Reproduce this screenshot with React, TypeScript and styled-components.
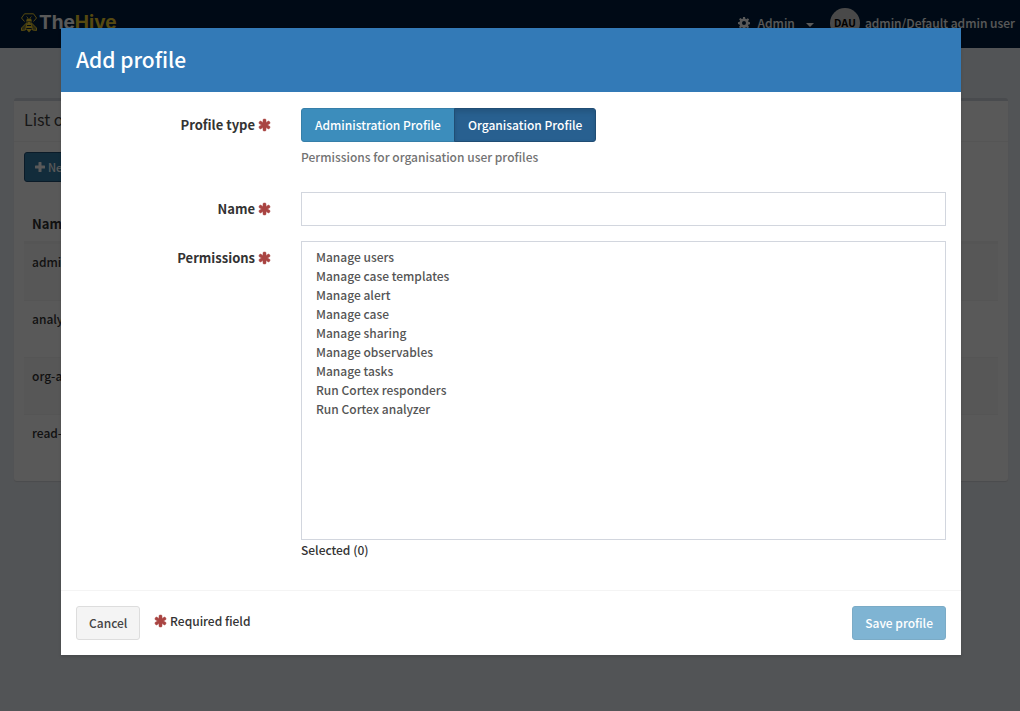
import React, { useState } from "react";
import styled, { createGlobalStyle } from "styled-components";

const GlobalStyle = createGlobalStyle`
  *, *::before, *::after { box-sizing: border-box; }
  html { min-height: 100%; background: #ecf0f5; }
  body {
    margin: 0;
    color: #333;
    background: #ecf0f5;
    font: 500 12px/20px "Noto Sans CJK SC", "Noto Sans", sans-serif;
  }
  button, input, select { font: inherit; }
`;

const Navbar = styled.header`
  display: flex;
  align-items: flex-start;
  justify-content: space-between;
  height: 48px;
  padding: 0 5px 0 20px;
  background: #001f3f;
  color: #fff;
`;

const Brand = styled.a`
  display: flex;
  align-items: center;
  gap: 1px;
  padding-top: 13px;
  color: #fff;
  font: 700 19px/20px Inter, sans-serif;
  text-decoration: none;
`;

const BrandAccent = styled.span`
  color: #f3d02f;
`;

const NavMenu = styled.nav`
  display: flex;
  align-items: center;
  gap: 16px;
  padding-top: 8px;
`;

const NavLink = styled.a`
  display: flex;
  align-items: center;
  gap: 5px;
  color: #fff;
  text-decoration: none;
`;

const AdminLink = styled(NavLink)`
  gap: 8px;
`;

const Caret = styled.span`
  margin: 4px 0 0 3px;
  border: 4px solid transparent;
  border-top-color: #fff;
  border-bottom: 0;
`;

const Avatar = styled.span`
  width: 30px;
  height: 30px;
  border-radius: 50%;
  background: #d2d2d2;
  color: #000;
  font: 700 10px/30px "Open Sans", sans-serif;
  text-align: center;
`;

const Content = styled.main`
  padding: 50px 12px 30px 14px;
`;

const Card = styled.section`
  border-top: 3px solid #d2d6de;
  border-radius: 3px;
  background: #fff;
  box-shadow: 0 1px 1px rgba(0, 0, 0, 0.1);
`;

const CardTitle = styled.h3`
  margin: 0;
  padding: 8px 10px 12px;
  border-bottom: 1px solid #f4f4f4;
  color: #444;
  font-size: 16px;
  font-weight: 400;
  line-height: 20px;
`;

const CardBody = styled.div`
  padding: 10px;
`;

const Button = styled.button`
  display: inline-flex;
  align-items: center;
  justify-content: center;
  height: 34px;
  padding: 0 12px;
  border: 1px solid #367fa9;
  border-radius: 3px;
  background: #3c8dbc;
  color: #fff;
  white-space: nowrap;
  &:disabled { opacity: 0.65; }
`;

const NewButton = styled(Button)`
  gap: 3px;
  height: 30px;
  padding: 0 10px;
  border-color: #204d74;
  background: #367fa9;
  font-size: 11px;
`;

const CancelButton = styled(Button)`
  border-color: #ddd;
  background: #f4f4f4;
  color: #444;
`;

const Table = styled.table`
  width: 100%;
  margin-top: 24px;
  border-collapse: separate;
  border-spacing: 0;
  th {
    height: 37px;
    padding: 8px 8px 7px;
    border-bottom: 2px solid #f4f4f4;
    font-size: 13px;
    text-align: left;
  }
  td {
    height: 57px;
    padding: 8px;
    border-top: 1px solid #f4f4f4;
    vertical-align: top;
  }
  tbody tr:nth-child(odd) { background: #f9f9f9; }
`;

const Overlay = styled.div`
  position: absolute;
  inset: 0;
  min-height: 100vh;
  padding: 28px 0 28px 2px;
  background: rgba(0, 0, 0, 0.65);
`;

const Dialog = styled.form`
  width: 100%;
  max-width: 900px;
  margin: 0 auto;
  background: #fff;
  box-shadow: 0 2px 3px rgba(0, 0, 0, 0.125);
`;

const DialogHeader = styled.header`
  padding: 15px 15px 16px;
  background: #337ab7;
  color: #fff;
`;

const DialogTitle = styled.h2`
  margin: 0;
  font-size: 21px;
  font-weight: 500;
  line-height: 33px;
`;

const DialogBody = styled.div`
  padding: 16px 15px 15px;
`;

const FormRow = styled.div`
  display: flex;
  margin: 0 -15px;
  padding-bottom: 15px;
`;

const LabelCell = styled.div`
  flex: 0 0 25%;
  padding: 7px 15px 0;
  font-size: 13px;
  font-weight: 700;
  text-align: right;
`;

const FieldCell = styled.div`
  flex: 0 0 75%;
  padding: 0 15px;
`;

const ButtonGroup = styled.div`
  display: flex;
`;

const TypeButton = styled(Button)<{ $active?: boolean; $side: "left" | "right" }>`
  padding: 0 13px;
  margin-left: ${(p) => (p.$side === "right" ? -1 : 0)}px;
  border-radius: ${(p) => (p.$side === "left" ? "3px 0 0 3px" : "0 3px 3px 0")};
  ${(p) =>
    p.$active &&
    `
    border-color: #204d74;
    background: #286090;
    box-shadow: inset 0 3px 5px rgba(0, 0, 0, 0.125);
    z-index: 1;
  `}
`;

const Help = styled.p`
  margin: 5px 0 10px;
  color: #737373;
`;

const TextInput = styled.input`
  display: block;
  width: 100%;
  height: 34px;
  padding: 6px 12px;
  border: 1px solid #d2d6de;
  border-radius: 0;
  background: #fff;
  color: #555;
  outline: 0;
`;

const PermissionList = styled.select`
  display: block;
  width: 100%;
  height: 299px;
  padding: 6px 12px;
  border: 1px solid #d2d6de;
  border-radius: 0;
  background: #fff;
  color: #555;
  outline: 0;
  option {
    height: 19px;
    padding: 0 2px;
    font-weight: 500;
    line-height: 19px;
  }
`;

const DialogFooter = styled.footer`
  display: flex;
  align-items: flex-start;
  gap: 14px;
  padding: 15px;
  border-top: 1px solid #f4f4f4;
`;

const Note = styled.span`
  flex: 1;
  padding-top: 5px;
`;

const Glyph = styled.svg`
  flex: none;
  fill: currentColor;
`;

const RequiredGlyph = styled(Glyph)`
  color: #a94442;
  vertical-align: -2px;
`;

const Required = () => (
  <RequiredGlyph width="13" height="14" viewBox="128 0 1536 1792" aria-label="required">
    <path
      stroke="currentColor"
      strokeWidth="60"
      d="M1546 1050l-266-154 266-154q46-26 59.500-77.500t-12.500-97.500l-64-110q-26-46-77.500-59.500t-97.500 12.500l-266 153v-307q0-52-38-90t-90-38h-128q-52 0-90 38t-38 90v307l-266-153q-46-26-97.500-12.500t-77.500 59.500l-64 110q-26 46-12.500 97.500t59.500 77.500l266 154-266 154q-46 26-59.500 77.500t12.500 97.500l64 110q26 46 77.500 59.500t97.500-12.500l266-153v307q0 52 38 90t90 38h128q52 0 90-38t38-90v-307l266 153q46 26 97.500 12.500t77.500-59.500l64-110q26-46 12.500-97.500t-59.500-77.500z"
    />
  </RequiredGlyph>
);

const Plus = () => (
  <Glyph width="10" height="10" viewBox="0 0 10 10">
    <path d="M4 0h2q.5 0 .5.500v3h3q.5 0 .5.500v2q0 .5-.5.500h-3v3q0 .5-.5.500h-2q-.5 0-.5-.5v-3h-3q-.5 0-.5-.5v-2q0-.5.500-.5h3v-3q0-.5.500-.5z" />
  </Glyph>
);

const Cog = () => (
  <Glyph width="12" height="12" viewBox="0 0 24 24">
    <path
      fillRule="evenodd"
      d="M10 0h4l.7 3.600 2 .8 3-2 2.500 2.500-2 3 .9 2.100 3.400.6v3.600l-3.600.7-.8 2 2 3-2.600 2.600-3-2-2 .9-.7 3.400h-3.600l-.7-3.600-2-.8-3 2-2.500-2.500 2-3-.9-2.100-3.300-.6v-3.800l3.600-.7.8-2-2-3 2.500-2.500 3 2 2.100-.9zM12 8a4 4 0 1 0 0 8a4 4 0 0 0 0-8z"
    />
  </Glyph>
);

const BeeLogo = () => (
  <svg width="18" height="20" viewBox="0 0 18 20" fill="none" stroke="#f3d02f" aria-hidden="true">
    <path d="M4.500 8.500L1.500 5 4.500.8h9L16.500 5 13.500 8.500" />
    <path d="M6.500 3.500L8 5M11.500 3.500L10 5" strokeWidth="0.8" />
    <path d="M7 5.500h4L12 8.500H6z" fill="#f3d02f" stroke="none" />
    <path d="M7 9.500L1.500 15v2.500l4-.5zM11 9.500l5.500 5.500v2.500l-4-.5z" fill="#f3d02f" fillOpacity="0.5" />
    <path d="M8 9h2l1.500 3h-5zM6 13h6v2H6zM6 16h6l-3 3.500z" fill="#f3d02f" stroke="none" />
  </svg>
);

const profiles = ["admin", "analyst", "org-admin", "read-only"];

const permissions = [
  "Manage users",
  "Manage case templates",
  "Manage alert",
  "Manage case",
  "Manage sharing",
  "Manage observables",
  "Manage tasks",
  "Run Cortex responders",
  "Run Cortex analyzer",
];

export default function App() {
  const [selected, setSelected] = useState<string[]>([]);

  return (
    <>
      <GlobalStyle />
      <Navbar>
        <Brand href="#">
          <BeeLogo />
          <span>The<BrandAccent>Hive</BrandAccent></span>
        </Brand>
        <NavMenu>
          <AdminLink href="#"><Cog />Admin<Caret /></AdminLink>
          <NavLink href="#"><Avatar>DAU</Avatar>admin/Default admin user</NavLink>
        </NavMenu>
      </Navbar>
      <Content>
        <Card>
          <CardTitle>List of profiles</CardTitle>
          <CardBody>
            <NewButton type="button"><Plus />New Profile</NewButton>
            <Table>
              <thead><tr><th>Name</th></tr></thead>
              <tbody>
                {profiles.map((name) => <tr key={name}><td>{name}</td></tr>)}
              </tbody>
            </Table>
          </CardBody>
        </Card>
      </Content>
      <Overlay>
        <Dialog role="dialog" aria-labelledby="dialog-title" onSubmit={(e) => e.preventDefault()}>
          <DialogHeader><DialogTitle id="dialog-title">Add profile</DialogTitle></DialogHeader>
          <DialogBody>
            <FormRow>
              <LabelCell id="type-label">Profile type <Required /></LabelCell>
              <FieldCell>
                <ButtonGroup role="group" aria-labelledby="type-label">
                  <TypeButton type="button" $side="left">Administration Profile</TypeButton>
                  <TypeButton type="button" $side="right" $active>Organisation Profile</TypeButton>
                </ButtonGroup>
                <Help>Permissions for organisation user profiles</Help>
              </FieldCell>
            </FormRow>
            <FormRow>
              <LabelCell><label htmlFor="name">Name <Required /></label></LabelCell>
              <FieldCell><TextInput id="name" type="text" /></FieldCell>
            </FormRow>
            <FormRow>
              <LabelCell><label htmlFor="permissions">Permissions <Required /></label></LabelCell>
              <FieldCell>
                <PermissionList
                  id="permissions"
                  multiple
                  value={selected}
                  onChange={(e) => setSelected(Array.from(e.target.selectedOptions, (o) => o.value))}
                >
                  {permissions.map((p) => <option key={p}>{p}</option>)}
                </PermissionList>
                <div>Selected ({selected.length})</div>
              </FieldCell>
            </FormRow>
          </DialogBody>
          <DialogFooter>
            <CancelButton type="button">Cancel</CancelButton>
            <Note><Required /> Required field</Note>
            <Button type="submit" disabled>Save profile</Button>
          </DialogFooter>
        </Dialog>
      </Overlay>
    </>
  );
}
